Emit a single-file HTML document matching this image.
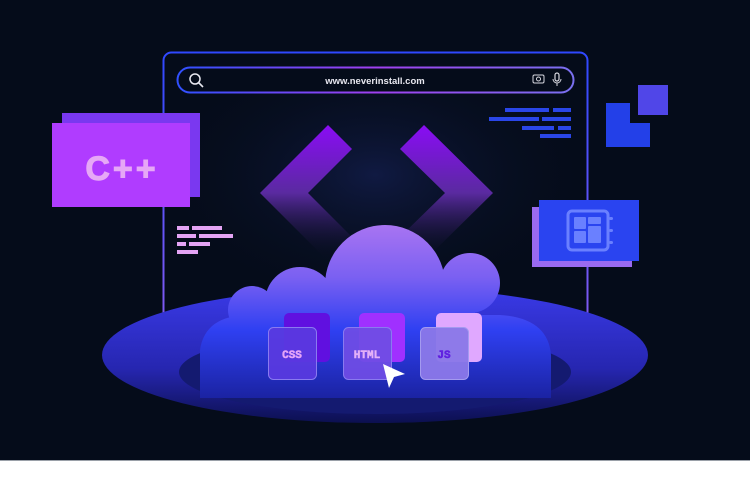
<!DOCTYPE html>
<html><head><style>
html,body{margin:0;padding:0;background:#fff;}
body{width:750px;height:483px;overflow:hidden;}
</style></head><body>
<svg width="750" height="483" viewBox="0 0 750 483" xmlns="http://www.w3.org/2000/svg" font-family="Liberation Sans, sans-serif">
<defs>
<linearGradient id="frameG" x1="0" y1="0" x2="0" y2="1"><stop offset="0" stop-color="#2f48ff"/><stop offset="1" stop-color="#8a5cf0"/></linearGradient>
<linearGradient id="barG" x1="0" y1="0" x2="1" y2="0"><stop offset="0" stop-color="#3050ff"/><stop offset="0.5" stop-color="#a040f0"/><stop offset="1" stop-color="#7a70f0"/></linearGradient>
<linearGradient id="chev" x1="0" y1="0" x2="0" y2="1"><stop offset="0" stop-color="#8a0cf5"/><stop offset="0.5" stop-color="#5a2aa0"/><stop offset="1" stop-color="#050c1a" stop-opacity="0"/></linearGradient>
<linearGradient id="cloud" gradientUnits="userSpaceOnUse" x1="0" y1="225" x2="0" y2="400"><stop offset="0" stop-color="#a874f2"/><stop offset="0.3" stop-color="#7a60f2"/><stop offset="0.6" stop-color="#2f40f2"/><stop offset="1" stop-color="#1a22a0"/></linearGradient>
<linearGradient id="disc" x1="0" y1="0" x2="0" y2="1"><stop offset="0" stop-color="#3a3ae8"/><stop offset="0.6" stop-color="#2626b0"/><stop offset="1" stop-color="#0c1050"/></linearGradient>
<radialGradient id="glow" cx="0.5" cy="0.5" r="0.5"><stop offset="0" stop-color="#2a3aa0" stop-opacity="0.3"/><stop offset="1" stop-color="#050c1a" stop-opacity="0"/></radialGradient>
</defs>
<rect width="750" height="461" fill="#050c1a"/>
<rect x="0" y="461" width="750" height="22" fill="#ffffff"/>
<rect x="0" y="460" width="750" height="1" fill="#9aa0a8"/>
<rect x="150" y="40" width="450" height="270" rx="14" fill="url(#glow)"/>
<rect x="163.5" y="52.5" width="424" height="300" rx="8" fill="none" stroke="url(#frameG)" stroke-width="2"/>
<rect x="177.5" y="67.5" width="396" height="25" rx="12.5" fill="#050c1a" stroke="url(#barG)" stroke-width="2"/>
<circle cx="195" cy="79" r="5" fill="none" stroke="#e8e8f0" stroke-width="1.5"/>
<line x1="198.5" y1="82.5" x2="203" y2="87" stroke="#e8e8f0" stroke-width="1.6"/>
<text x="375" y="84" text-anchor="middle" font-size="9.5" font-weight="bold" fill="#e8e8f0">www.neverinstall.com</text>
<rect x="533" y="75" width="11" height="8" rx="1.5" fill="none" stroke="#d8d8e0" stroke-width="1"/>
<circle cx="538.5" cy="79" r="2" fill="none" stroke="#d8d8e0" stroke-width="1"/>
<rect x="555" y="73" width="4" height="8" rx="2" fill="none" stroke="#d8d8e0" stroke-width="1.2"/>
<path d="M553 79 a4 4 0 0 0 8 0 M557 83 v3" fill="none" stroke="#d8d8e0" stroke-width="1"/>
<g fill="#2a46e8">
<rect x="505" y="108" width="44" height="4"/><rect x="553" y="108" width="18" height="4"/>
<rect x="489" y="117" width="50" height="4"/><rect x="542" y="117" width="29" height="4"/>
<rect x="522" y="126" width="32" height="4"/><rect x="558" y="126" width="13" height="4"/>
<rect x="540" y="134" width="31" height="4"/>
</g>
<g fill="#e4a4f4">
<rect x="177" y="226" width="12" height="4"/><rect x="192" y="226" width="30" height="4"/>
<rect x="177" y="234" width="19" height="4"/><rect x="199" y="234" width="34" height="4"/>
<rect x="177" y="242" width="9" height="4"/><rect x="189" y="242" width="21" height="4"/>
<rect x="177" y="250" width="21" height="4"/>
</g>
<polygon points="328,125 352,149 308,193 352,237 328,261 260,193" fill="url(#chev)"/>
<polygon points="424,125 400,149 445,193 400,237 424,261 493,193" fill="url(#chev)"/>
<rect x="62" y="113" width="138" height="84" fill="#7a38f0"/>
<rect x="52" y="123" width="138" height="84" fill="#b03cff"/>
<text x="122" y="180" text-anchor="middle" font-size="34" font-weight="bold" fill="#e6a8f6" stroke="#e6a8f6" stroke-width="1" letter-spacing="3">C++</text>
<rect x="638" y="85" width="30" height="30" fill="#5046e8"/>
<path d="M606 103 H630 V123 H650 V147 H606 Z" fill="#2340e8"/>
<rect x="532" y="207" width="100" height="60" fill="#9a6af0"/>
<rect x="539" y="200" width="100" height="61" fill="#2a44f0"/>
<rect x="568" y="211" width="40" height="39" rx="4" fill="none" stroke="#6a80ff" stroke-width="3"/>
<g fill="#6a80ff"><rect x="574" y="217" width="12" height="12" rx="1"/><rect x="588" y="217" width="13" height="7" rx="1"/><rect x="574" y="231" width="12" height="12" rx="1"/><rect x="588" y="226" width="13" height="17" rx="1"/>
<rect x="609" y="217" width="4" height="3" rx="1.5"/><rect x="609" y="229" width="4" height="3" rx="1.5"/><rect x="609" y="241" width="4" height="3" rx="1.5"/></g>
<ellipse cx="375" cy="355" rx="273" ry="68" fill="url(#disc)"/>
<ellipse cx="375" cy="372" rx="196" ry="42" fill="#141a70"/>
<g fill="url(#cloud)">
<circle cx="385" cy="285" r="60"/>
<circle cx="470" cy="283" r="30"/>
<circle cx="252" cy="310" r="24"/>
<circle cx="300" cy="302" r="35"/>
<rect x="285" y="290" width="190" height="50"/>
<path d="M200 398 V350 Q205 315 250 315 H500 Q548 318 551 355 V398 Z"/>
</g>
<rect x="284" y="313" width="46" height="49" rx="5" fill="#6010e0"/>
<rect x="359" y="313" width="46" height="49" rx="5" fill="#a030ff"/>
<rect x="436" y="313" width="46" height="49" rx="5" fill="#e0a8ff"/>
<rect x="268.5" y="327.5" width="48" height="52" rx="5" fill="#5a3ae0" fill-opacity="0.92" stroke="#8a7af0"/>
<rect x="343.5" y="327.5" width="48" height="52" rx="5" fill="#6e4ce4" fill-opacity="0.94" stroke="#8a7af0"/>
<rect x="420.5" y="327.5" width="48" height="52" rx="5" fill="#8a78e8" fill-opacity="0.96" stroke="#a49af0"/>
<g font-family="Liberation Mono, monospace" font-weight="bold" font-size="11" text-anchor="middle" stroke-width="0.5">
<text x="292" y="358" fill="#e4a4f8" stroke="#e4a4f8">CSS</text>
<text x="367" y="358" fill="#e4b0f8" stroke="#e4b0f8">HTML</text>
<text x="444" y="358" fill="#6020e0" stroke="#6020e0">JS</text>
</g>
<path d="M383 364 L405 374 L394 377 L389 388 Z" fill="#ffffff"/>
</svg>
</body></html>
